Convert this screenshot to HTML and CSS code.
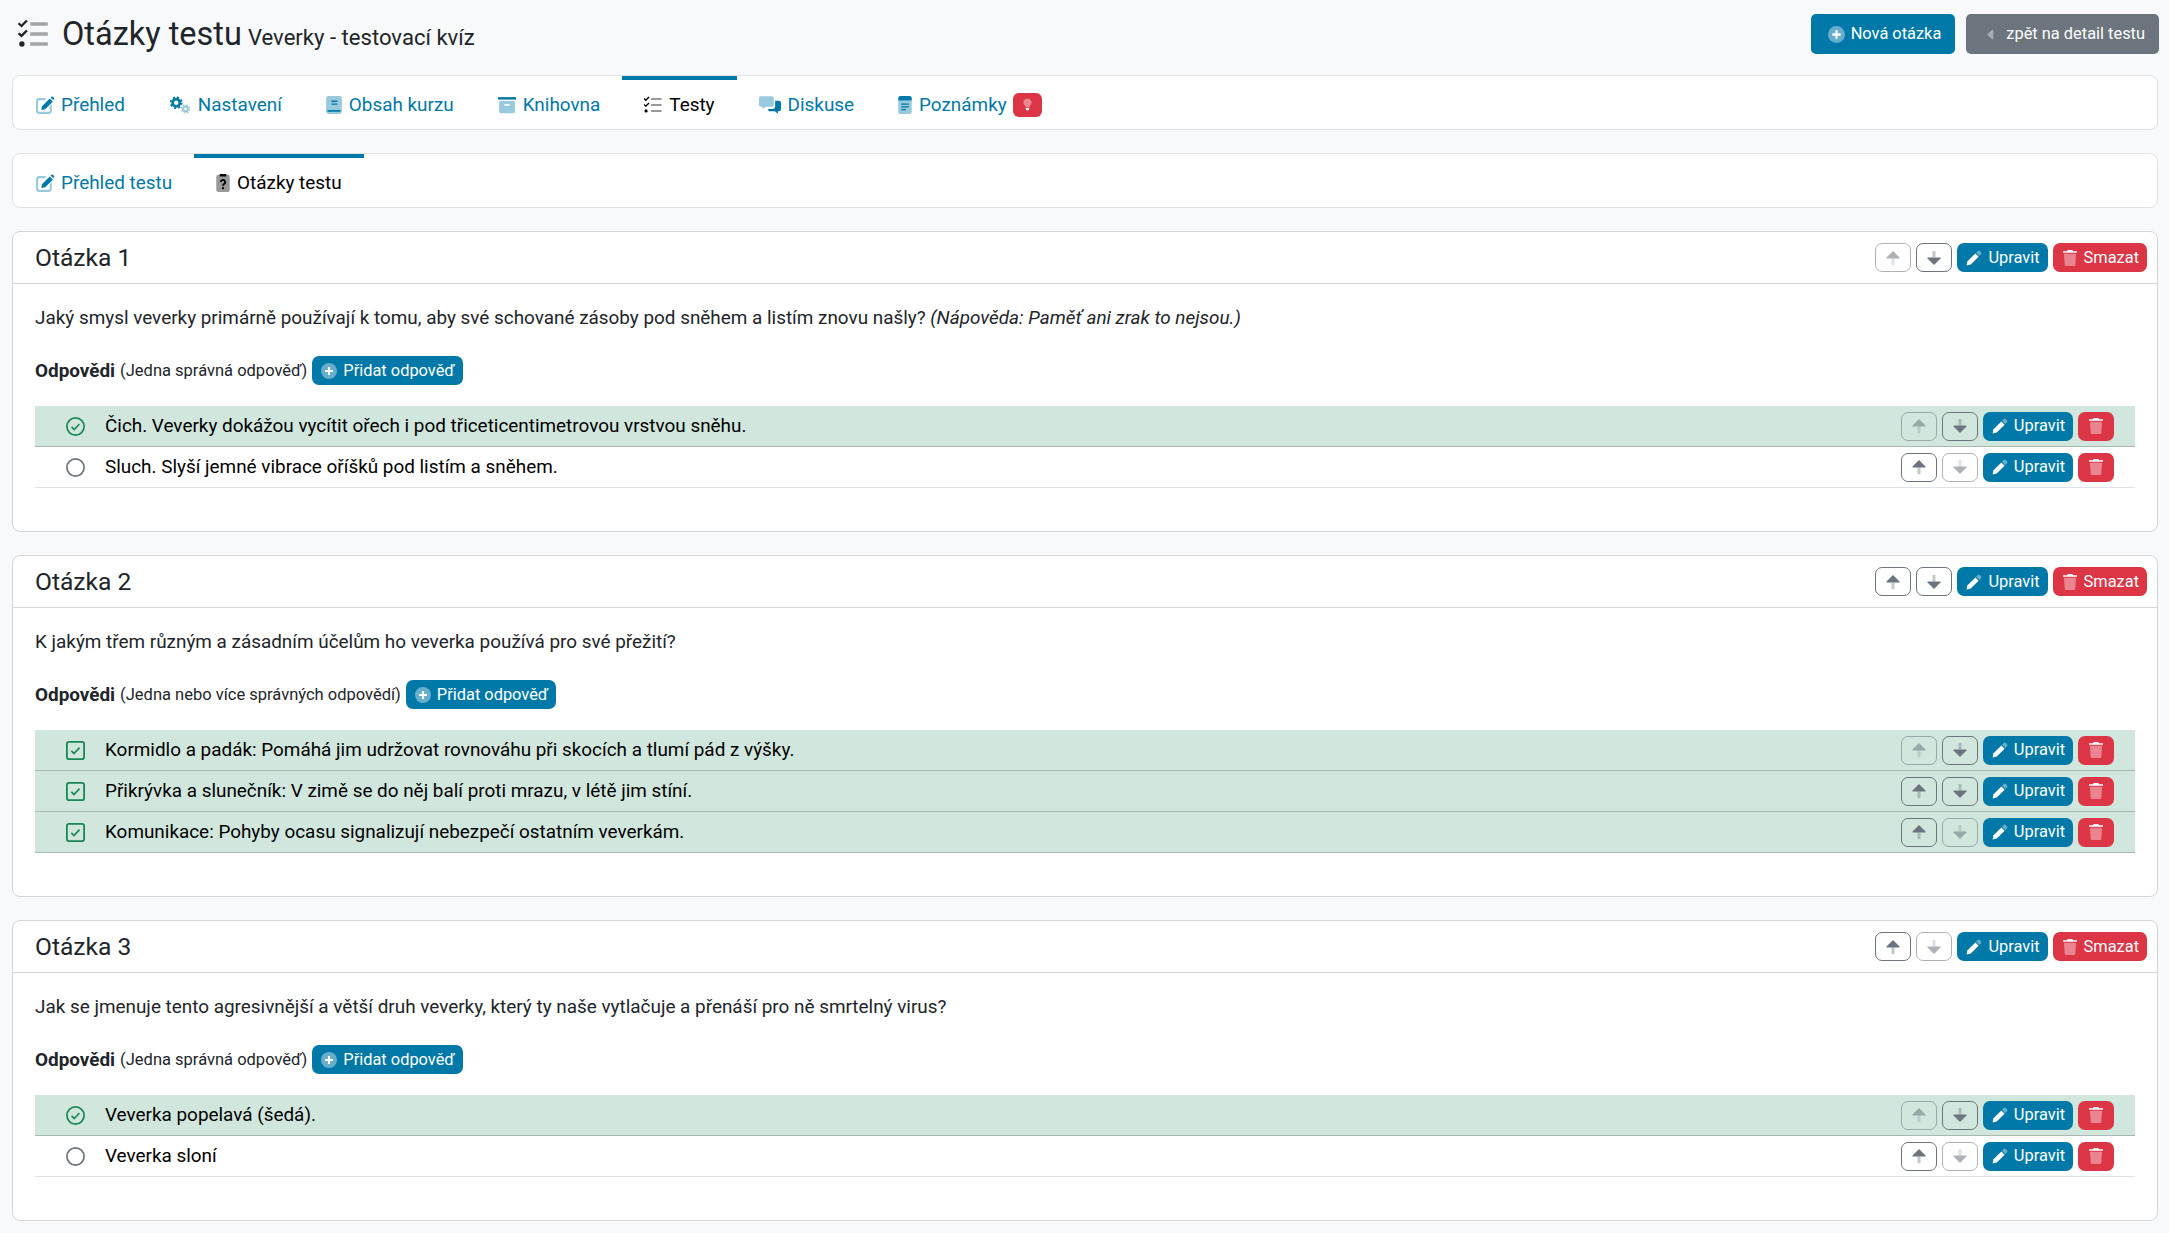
FILE: index.html
```html
<!DOCTYPE html>
<html lang="cs">
<head>
    <meta charset="UTF-8">
    <meta name="viewport" content="width=device-width, initial-scale=1.0">
    <title>Otázky testu</title>
    <link rel="stylesheet" href="styles.css">
</head>
<body>
    <!-- ikony -->
    <svg class="sprite" xmlns="http://www.w3.org/2000/svg">
        <symbol id="i-edit" viewBox="0 0 512 512">
            <path class="soft" d="M90 60h210l-60 60H90a30 30 0 0 0-30 30v270a30 30 0 0 0 30 30h270a30 30 0 0 0 30-30V290l60-60v190a90 90 0 0 1-90 90H90a90 90 0 0 1-90-90V150a90 90 0 0 1 90-90z"/>
            <path d="M170 290 390 70l90 90-220 220-110 20zM415 45l25-25q20-18 40 0l30 30q18 20 0 40l-25 25z"/>
        </symbol>
        <symbol id="i-gears" viewBox="0 0 640 512">
            <g fill="none">
                <circle cx="210" cy="190" r="105" stroke="currentColor" stroke-width="80"/>
                <circle cx="210" cy="190" r="160" stroke="currentColor" stroke-width="50" stroke-dasharray="62 64"/>
                <g class="soft">
                    <circle cx="480" cy="370" r="68" stroke="currentColor" stroke-width="60"/>
                    <circle cx="480" cy="370" r="118" stroke="currentColor" stroke-width="44" stroke-dasharray="46 47"/>
                </g>
            </g>
        </symbol>
        <symbol id="i-book" viewBox="0 0 448 512">
            <path class="soft" d="M70 0h310a68 68 0 0 1 68 68v376a68 68 0 0 1-68 68H70a70 70 0 0 1-70-70V70A70 70 0 0 1 70 0z"/>
            <path d="M150 130h170v40H150zM150 210h170v40H150zM40 400h370v50H40z"/>
        </symbol>
        <symbol id="i-box" viewBox="0 0 512 512">
            <path d="M0 32h512v70H0z"/>
            <path class="soft" d="M32 140h448v300a50 50 0 0 1-50 50H82a50 50 0 0 1-50-50z"/>
            <path class="hole" d="M180 230h152v44H180z"/>
        </symbol>
        <symbol id="i-tasks" viewBox="0 0 512 512">
            <path class="soft" d="M200 56h300v60H200zM200 226h300v60H200zM200 396h300v60H200z"/>
            <path d="M16 60 50 92 128 12l30 28L52 146-14 84zM16 230l34 32 78-80 30 28L52 316-14 254z"/>
            <circle cx="58" cy="426" r="46"/>
        </symbol>
        <symbol id="i-comments" viewBox="0 0 640 512">
            <path class="soft" d="M60 0h310a60 60 0 0 1 60 60v190a60 60 0 0 1-60 60H190l-90 70v-70H60a60 60 0 0 1-60-60V60A60 60 0 0 1 60 0z"/>
            <path d="M470 130h110a60 60 0 0 1 60 60v190a60 60 0 0 1-60 60h-30v70l-90-70H310a60 60 0 0 1-40-16v-54h130a70 70 0 0 0 70-70z"/>
        </symbol>
        <symbol id="i-notes" viewBox="0 0 384 512">
            <path class="soft" d="M0 120h384v332a60 60 0 0 1-60 60H60a60 60 0 0 1-60-60z"/>
            <path d="M60 0h264a60 60 0 0 1 60 60v70H0V60A60 60 0 0 1 60 0zM80 210h224v36H80zM80 290h224v36H80zM80 370h140v36H80z"/>
        </symbol>
        <symbol id="i-bulb" viewBox="0 0 384 512">
            <path class="soft" d="M192 0a170 170 0 0 1 130 280c-30 35-50 60-56 100H118c-6-40-26-65-56-100A170 170 0 0 1 192 0z"/>
            <path d="M118 400h148v40q0 72-74 72t-74-72z"/>
        </symbol>
        <symbol id="i-clip" viewBox="0 0 384 512">
            <path class="soft" d="M60 24h264a60 60 0 0 1 60 60v368a60 60 0 0 1-60 60H60a60 60 0 0 1-60-60V84a60 60 0 0 1 60-60z"/>
            <path d="M100 0h184v70H100z"/>
            <path fill="none" stroke="currentColor" stroke-width="50" d="M130 230a62 62 0 1 1 90 55c-20 12-28 24-28 50"/>
            <circle cx="192" cy="402" r="32"/>
        </symbol>
        <symbol id="i-plus" viewBox="0 0 512 512">
            <circle class="soft" cx="256" cy="256" r="256"/>
            <path d="M222 130h68v92h92v68h-92v92h-68v-92h-92v-68h92z"/>
        </symbol>
        <symbol id="i-caret" viewBox="0 0 192 512">
            <path class="soft" d="M150 110q30-14 30 20v252q0 34-30 20L20 285q-28-29 0-58z"/>
        </symbol>
        <symbol id="i-up" viewBox="0 0 448 512">
            <path d="M224 32 432 240q18 24-14 32H30q-32-8-14-32z"/>
            <path class="soft" d="M176 272h96v192q0 20-20 20h-56q-20 0-20-20z"/>
        </symbol>
        <symbol id="i-down" viewBox="0 0 448 512">
            <path d="M224 480 432 272q18-24-14-32H30q-32 8-14 32z"/>
            <path class="soft" d="M176 240h96V48q0-20-20-20h-56q-20 0-20 20z"/>
        </symbol>
        <symbol id="i-pen" viewBox="0 0 512 512">
            <path d="M18 494 48 360 300 108l104 104-252 252z"/>
            <path class="soft" d="M324 84l50-50q34-34 68 0l36 36q34 34 0 68l-50 50z"/>
        </symbol>
        <symbol id="i-trash" viewBox="0 0 448 512">
            <path d="M150 0h148l18 40h132v50H0V40h132z"/>
            <path class="soft" d="M32 120h384l-22 350q-3 42-46 42H100q-43 0-46-42z"/>
        </symbol>
        <symbol id="i-ok-circle" viewBox="0 0 512 512">
            <circle cx="256" cy="256" r="232" fill="none" stroke="currentColor" stroke-width="46"/>
            <path class="dark" fill="none" stroke-width="42" d="M150 265l72 72 140-150"/>
        </symbol>
        <symbol id="i-ok-square" viewBox="0 0 512 512">
            <rect x="24" y="24" width="464" height="464" rx="60" fill="none" stroke="currentColor" stroke-width="48"/>
            <path class="dark" fill="none" stroke-width="44" d="M145 265l70 72 150-160"/>
        </symbol>
        <symbol id="i-circle" viewBox="0 0 512 512">
            <circle cx="256" cy="256" r="232" fill="none" stroke="currentColor" stroke-width="46"/>
        </symbol>
    </svg>

    <header class="top">
        <h1>
            <svg class="ico ico-title"><use href="#i-tasks"/></svg>
            <span>Otázky testu</span>
            <small>Veverky - testovací kvíz</small>
        </h1>
        <div class="top-buttons">
            <a class="btn btn-main"><svg class="ico ico-plus"><use href="#i-plus"/></svg>Nová otázka</a>
            <a class="btn btn-back"><svg class="ico ico-caret"><use href="#i-caret"/></svg>zpět na detail testu</a>
        </div>
    </header>

    <nav class="tabs">
        <a class="tab"><svg class="ico w18"><use href="#i-edit"/></svg>Přehled</a>
        <a class="tab"><svg class="ico w22"><use href="#i-gears"/></svg>Nastavení</a>
        <a class="tab"><svg class="ico w16"><use href="#i-book"/></svg>Obsah kurzu</a>
        <a class="tab"><svg class="ico w18"><use href="#i-box"/></svg>Knihovna</a>
        <a class="tab active"><svg class="ico w18"><use href="#i-tasks"/></svg>Testy</a>
        <a class="tab"><svg class="ico w22"><use href="#i-comments"/></svg>Diskuse</a>
        <a class="tab"><svg class="ico w14"><use href="#i-notes"/></svg>Poznámky<span class="badge"><svg class="ico ico-bulb"><use href="#i-bulb"/></svg></span></a>
    </nav>

    <nav class="tabs">
        <a class="tab"><svg class="ico w18"><use href="#i-edit"/></svg>Přehled testu</a>
        <a class="tab active"><svg class="ico w14"><use href="#i-clip"/></svg>Otázky testu</a>
    </nav>

    <!-- Otázka 1 -->
    <section class="card">
        <div class="card-head">
            <h2>Otázka 1</h2>
            <div class="actions">
                <a class="btn-s btn-arrow off"><svg class="ico ico-s"><use href="#i-up"/></svg></a>
                <a class="btn-s btn-arrow"><svg class="ico ico-s"><use href="#i-down"/></svg></a>
                <a class="btn-s btn-edit"><svg class="ico ico-s"><use href="#i-pen"/></svg>Upravit</a>
                <a class="btn-s btn-del"><svg class="ico ico-s"><use href="#i-trash"/></svg>Smazat</a>
            </div>
        </div>
        <div class="card-body">
            <p class="question">Jaký smysl veverky primárně používají k tomu, aby své schované zásoby pod sněhem a listím znovu našly? <em>(Nápověda: Paměť ani zrak to nejsou.)</em></p>
            <div class="answers-head">
                <strong>Odpovědi</strong> <span class="hint">(Jedna správná odpověď)</span>
                <a class="btn-s btn-edit"><svg class="ico ico-s"><use href="#i-plus"/></svg>Přidat odpověď</a>
            </div>
            <div class="answers">
                <div class="answer right">
                    <svg class="ico mark"><use href="#i-ok-circle"/></svg>
                    <span class="answer-text">Čich. Veverky dokážou vycítit ořech i pod třiceticentimetrovou vrstvou sněhu.</span>
                    <div class="actions">
                        <a class="btn-s btn-arrow off"><svg class="ico ico-s"><use href="#i-up"/></svg></a>
                        <a class="btn-s btn-arrow"><svg class="ico ico-s"><use href="#i-down"/></svg></a>
                        <a class="btn-s btn-edit"><svg class="ico ico-s"><use href="#i-pen"/></svg>Upravit</a>
                        <a class="btn-s btn-del only"><svg class="ico ico-s"><use href="#i-trash"/></svg></a>
                    </div>
                </div>
                <div class="answer">
                    <svg class="ico mark"><use href="#i-circle"/></svg>
                    <span class="answer-text">Sluch. Slyší jemné vibrace oříšků pod listím a sněhem.</span>
                    <div class="actions">
                        <a class="btn-s btn-arrow"><svg class="ico ico-s"><use href="#i-up"/></svg></a>
                        <a class="btn-s btn-arrow off"><svg class="ico ico-s"><use href="#i-down"/></svg></a>
                        <a class="btn-s btn-edit"><svg class="ico ico-s"><use href="#i-pen"/></svg>Upravit</a>
                        <a class="btn-s btn-del only"><svg class="ico ico-s"><use href="#i-trash"/></svg></a>
                    </div>
                </div>
            </div>
        </div>
    </section>

    <!-- Otázka 2 -->
    <section class="card">
        <div class="card-head">
            <h2>Otázka 2</h2>
            <div class="actions">
                <a class="btn-s btn-arrow"><svg class="ico ico-s"><use href="#i-up"/></svg></a>
                <a class="btn-s btn-arrow"><svg class="ico ico-s"><use href="#i-down"/></svg></a>
                <a class="btn-s btn-edit"><svg class="ico ico-s"><use href="#i-pen"/></svg>Upravit</a>
                <a class="btn-s btn-del"><svg class="ico ico-s"><use href="#i-trash"/></svg>Smazat</a>
            </div>
        </div>
        <div class="card-body">
            <p class="question">K jakým třem různým a zásadním účelům ho veverka používá pro své přežití?</p>
            <div class="answers-head">
                <strong>Odpovědi</strong> <span class="hint">(Jedna nebo více správných odpovědí)</span>
                <a class="btn-s btn-edit"><svg class="ico ico-s"><use href="#i-plus"/></svg>Přidat odpověď</a>
            </div>
            <div class="answers">
                <div class="answer right">
                    <svg class="ico mark"><use href="#i-ok-square"/></svg>
                    <span class="answer-text">Kormidlo a padák: Pomáhá jim udržovat rovnováhu při skocích a tlumí pád z výšky.</span>
                    <div class="actions">
                        <a class="btn-s btn-arrow off"><svg class="ico ico-s"><use href="#i-up"/></svg></a>
                        <a class="btn-s btn-arrow"><svg class="ico ico-s"><use href="#i-down"/></svg></a>
                        <a class="btn-s btn-edit"><svg class="ico ico-s"><use href="#i-pen"/></svg>Upravit</a>
                        <a class="btn-s btn-del only"><svg class="ico ico-s"><use href="#i-trash"/></svg></a>
                    </div>
                </div>
                <div class="answer right">
                    <svg class="ico mark"><use href="#i-ok-square"/></svg>
                    <span class="answer-text">Přikrývka a slunečník: V zimě se do něj balí proti mrazu, v létě jim stíní.</span>
                    <div class="actions">
                        <a class="btn-s btn-arrow"><svg class="ico ico-s"><use href="#i-up"/></svg></a>
                        <a class="btn-s btn-arrow"><svg class="ico ico-s"><use href="#i-down"/></svg></a>
                        <a class="btn-s btn-edit"><svg class="ico ico-s"><use href="#i-pen"/></svg>Upravit</a>
                        <a class="btn-s btn-del only"><svg class="ico ico-s"><use href="#i-trash"/></svg></a>
                    </div>
                </div>
                <div class="answer right">
                    <svg class="ico mark"><use href="#i-ok-square"/></svg>
                    <span class="answer-text">Komunikace: Pohyby ocasu signalizují nebezpečí ostatním veverkám.</span>
                    <div class="actions">
                        <a class="btn-s btn-arrow"><svg class="ico ico-s"><use href="#i-up"/></svg></a>
                        <a class="btn-s btn-arrow off"><svg class="ico ico-s"><use href="#i-down"/></svg></a>
                        <a class="btn-s btn-edit"><svg class="ico ico-s"><use href="#i-pen"/></svg>Upravit</a>
                        <a class="btn-s btn-del only"><svg class="ico ico-s"><use href="#i-trash"/></svg></a>
                    </div>
                </div>
            </div>
        </div>
    </section>

    <!-- Otázka 3 -->
    <section class="card">
        <div class="card-head">
            <h2>Otázka 3</h2>
            <div class="actions">
                <a class="btn-s btn-arrow"><svg class="ico ico-s"><use href="#i-up"/></svg></a>
                <a class="btn-s btn-arrow off"><svg class="ico ico-s"><use href="#i-down"/></svg></a>
                <a class="btn-s btn-edit"><svg class="ico ico-s"><use href="#i-pen"/></svg>Upravit</a>
                <a class="btn-s btn-del"><svg class="ico ico-s"><use href="#i-trash"/></svg>Smazat</a>
            </div>
        </div>
        <div class="card-body">
            <p class="question">Jak se jmenuje tento agresivnější a větší druh veverky, který ty naše vytlačuje a přenáší pro ně smrtelný virus?</p>
            <div class="answers-head">
                <strong>Odpovědi</strong> <span class="hint">(Jedna správná odpověď)</span>
                <a class="btn-s btn-edit"><svg class="ico ico-s"><use href="#i-plus"/></svg>Přidat odpověď</a>
            </div>
            <div class="answers">
                <div class="answer right">
                    <svg class="ico mark"><use href="#i-ok-circle"/></svg>
                    <span class="answer-text">Veverka popelavá (šedá).</span>
                    <div class="actions">
                        <a class="btn-s btn-arrow off"><svg class="ico ico-s"><use href="#i-up"/></svg></a>
                        <a class="btn-s btn-arrow"><svg class="ico ico-s"><use href="#i-down"/></svg></a>
                        <a class="btn-s btn-edit"><svg class="ico ico-s"><use href="#i-pen"/></svg>Upravit</a>
                        <a class="btn-s btn-del only"><svg class="ico ico-s"><use href="#i-trash"/></svg></a>
                    </div>
                </div>
                <div class="answer">
                    <svg class="ico mark"><use href="#i-circle"/></svg>
                    <span class="answer-text">Veverka sloní</span>
                    <div class="actions">
                        <a class="btn-s btn-arrow"><svg class="ico ico-s"><use href="#i-up"/></svg></a>
                        <a class="btn-s btn-arrow off"><svg class="ico ico-s"><use href="#i-down"/></svg></a>
                        <a class="btn-s btn-edit"><svg class="ico ico-s"><use href="#i-pen"/></svg>Upravit</a>
                        <a class="btn-s btn-del only"><svg class="ico ico-s"><use href="#i-trash"/></svg></a>
                    </div>
                </div>
            </div>
        </div>
    </section>
</body>
</html>
```

FILE: styles.css
```css
* {
    box-sizing: border-box;
}
body {
    margin: 0;
    padding: 0 11px 0 12px;
    background-color: #f8f9fa;
    color: #212529;
    font-family: Roboto, "Liberation Sans", sans-serif;
    font-size: 18.9px;
    line-height: 28px;
}
.sprite {
    display: none;
}
.soft {
    opacity: .4;
}
.hole {
    fill: #fff;
}
.ico {
    display: block;
    flex: none;
    height: 18px;
    fill: currentColor;
    overflow: visible;
}
.w14 { width: 14px; }
.w16 { width: 16px; }
.w18 { width: 18px; }
.w22 { width: 22px; }

/* Capçalera */
.top {
    display: flex;
    align-items: center;
    justify-content: space-between;
    height: 75px;
    padding-bottom: 7px;
}
h1 {
    display: flex;
    align-items: baseline;
    gap: 6px;
    margin: 0;
    font-size: 32.5px;
    font-weight: 400;
    line-height: 1.2;
}
h1 small {
    font-size: 22.1px;
}
.ico-title {
    align-self: center;
    width: 33px;
    height: 30px;
    margin: 0 6px 0 5px;
}
.top-buttons {
    display: flex;
    gap: 11px;
    margin-right: -1px;
}
.btn {
    display: flex;
    align-items: center;
    height: 40px;
    padding: 0 14px 0 17px;
    border-radius: 5px;
    color: #fff;
    font-size: 16.4px;
}
.btn-main {
    background-color: #0079a8;
}
.btn-back {
    background-color: #6c757d;
}
.ico-plus {
    width: 17px;
    height: 17px;
    margin-right: 6px;
}
.ico-caret {
    width: 7px;
    height: 17px;
    margin: 0 12px 0 4px;
}

/* Pestanyes */
.tabs {
    display: flex;
    height: 55px;
    margin-bottom: 23px;
    padding-left: 1px;
    background-color: #fff;
    border: 1px solid #dee2e6;
    border-radius: 8px;
}
.tab {
    display: flex;
    align-items: center;
    gap: 7px;
    padding: 0 22px;
    border-top: 4px solid transparent;
    color: #0079a8;
}
.tab.active {
    border-top-color: #0079a8;
    color: #000;
}
.badge {
    display: flex;
    align-items: center;
    justify-content: center;
    width: 29px;
    height: 24px;
    margin-left: -1px;
    border-radius: 6px;
    background-color: #dc3545;
    color: #fff;
}
.ico-bulb {
    width: 9px;
    height: 13px;
}

/* Targetes de preguntes */
.card {
    margin-bottom: 23px;
    background-color: #fff;
    border: 1px solid #d3d6d9;
    border-radius: 8px;
}
.card-head {
    display: flex;
    align-items: center;
    justify-content: space-between;
    height: 52px;
    padding: 0 10px 0 22px;
    border-bottom: 1px solid #d3d6d9;
}
h2 {
    margin: 0;
    font-size: 24.6px;
    font-weight: 400;
}
.card-body {
    padding: 20px 22px 43px;
}
.question {
    margin: 0 0 24px;
}
.answers-head {
    display: flex;
    align-items: center;
    gap: 5px;
    height: 29px;
    margin-bottom: 21px;
}
.hint {
    font-size: 16.5px;
}
.actions {
    display: flex;
    gap: 5px;
}
.btn-s {
    display: flex;
    align-items: center;
    gap: 6px;
    height: 29px;
    padding: 0 8px 0 9px;
    border-radius: 7px;
    font-size: 16.4px;
    white-space: nowrap;
}
.ico-s {
    width: 16px;
    height: 16px;
}
.btn-edit {
    background-color: #0079a8;
    color: #fff;
}
.btn-del {
    background-color: #dc3545;
    color: #fff;
}
.btn-del.only {
    justify-content: center;
    width: 36px;
    padding: 0;
}
.btn-arrow {
    justify-content: center;
    width: 36px;
    padding: 0;
    border: 1px solid #6c757d;
    color: #6c757d;
}
.btn-arrow.off {
    opacity: .55;
}

/* Respostes */
.answer {
    display: flex;
    align-items: center;
    height: 41px;
    padding: 0 21px 0 31px;
    border-bottom: 1px solid #dee2e6;
    color: #000;
}
.answer.right {
    background-color: #d1e7dd;
    border-bottom-color: #a7b9b1;
}
.answer-text {
    flex: 1;
    margin-left: 20px;
}
.mark {
    width: 19px;
    height: 19px;
    color: #6c757d;
}
.right .mark {
    color: #198754;
}
.dark {
    stroke: currentColor;
}
```
